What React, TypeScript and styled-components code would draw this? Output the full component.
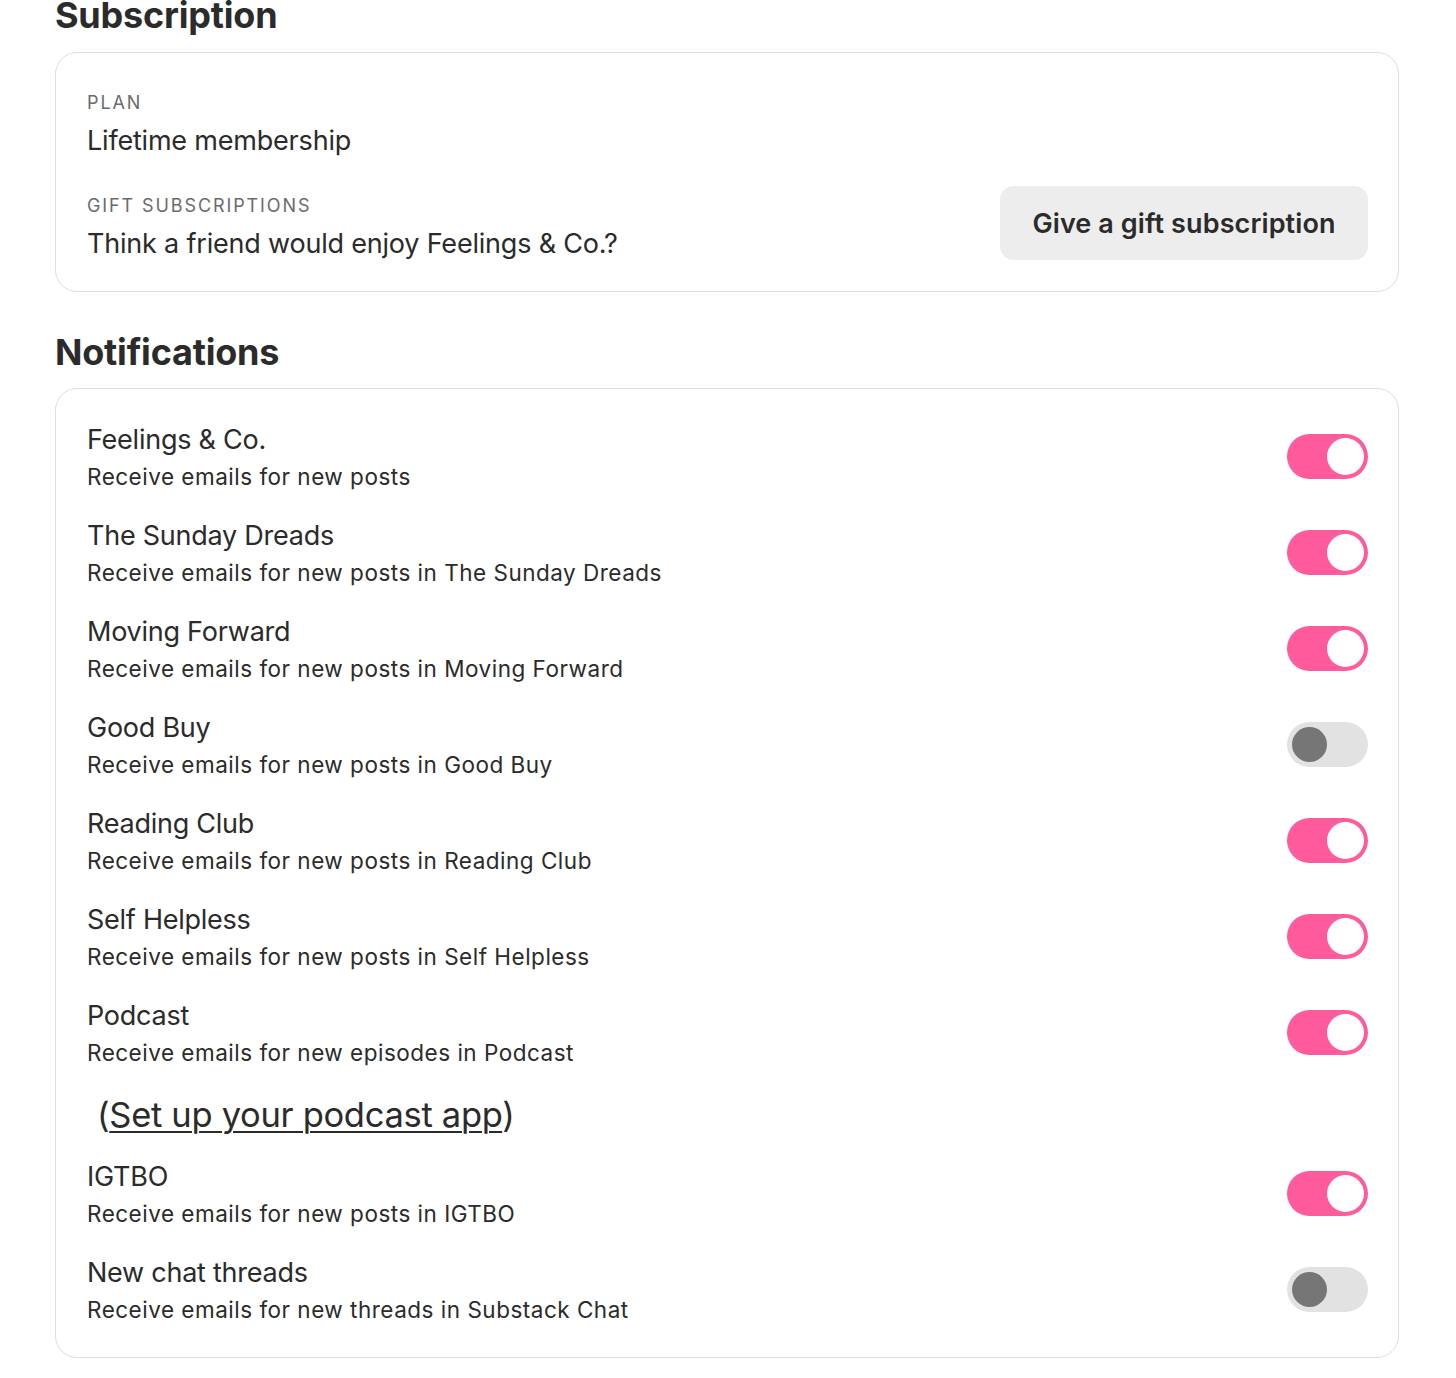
import React from 'react';
import styled, { createGlobalStyle } from 'styled-components';

const GlobalStyle = createGlobalStyle`
  html, body {
    margin: 0;
    padding: 0;
    background: #ffffff;
  }
  body {
    font-family: Inter, "Noto Sans", "Liberation Sans", sans-serif;
    color: #2b2b2b;
    -webkit-font-smoothing: antialiased;
  }
`;

const Page = styled.div`
  width: 1344px;
  padding: 0 0 20px 55px;
  margin-top: -7px;
`;

const SectionTitle = styled.h2<{ $gap?: number }>`
  font-size: 36px;
  line-height: 44px;
  font-weight: 700;
  letter-spacing: -0.2px;
  color: #2b2b2b;
  margin: 0 0 ${(p) => p.$gap ?? 20}px 0;
`;

const Card = styled.div`
  border: 1.5px solid #dedede;
  border-radius: 22px;
  box-sizing: border-box;
  margin-bottom: 38px;
`;

const SubBody = styled.div`
  padding: 38px 30px 30px 31px;
  display: flex;
  flex-direction: column;
  gap: 28px;
`;

const InfoRow = styled.div`
  display: flex;
  align-items: flex-end;
  justify-content: space-between;
`;

const Label = styled.div`
  font-size: 18px;
  line-height: 24px;
  letter-spacing: 1.9px;
  text-transform: uppercase;
  color: #6b6b6b;
  margin-bottom: 9px;
`;

const Value = styled.div`
  font-size: 27px;
  line-height: 34px;
  letter-spacing: -0.2px;
  color: #2b2b2b;
`;

const GiftButton = styled.button`
  font-family: inherit;
  background: #ededed;
  border: none;
  border-radius: 14px;
  width: 368px;
  height: 74px;
  font-size: 27px;
  font-weight: 600;
  color: #2b2b2b;
  letter-spacing: 0.1px;
  cursor: pointer;
  margin-bottom: 1px;
`;

const NotifBody = styled.div`
  padding: 32px 30px 32px 31px;
  display: flex;
  flex-direction: column;
  gap: 25px;
`;

const NotifRow = styled.div`
  display: flex;
  align-items: center;
  justify-content: space-between;
`;

const NotifTitle = styled.div`
  font-size: 27px;
  line-height: 38px;
  letter-spacing: -0.25px;
  color: #2b2b2b;
`;

const NotifSub = styled.div`
  font-size: 22.5px;
  line-height: 30px;
  letter-spacing: 0.5px;
  color: #2b2b2b;
  margin-top: 3px;
`;

const Toggle = styled.div<{ $on: boolean }>`
  width: 81px;
  height: 45px;
  border-radius: 23px;
  background: ${(p) => (p.$on ? '#ff5a9c' : '#e2e2e2')};
  position: relative;
  flex-shrink: 0;
  &::after {
    content: '';
    position: absolute;
    top: ${(p) => (p.$on ? 4 : 5)}px;
    left: ${(p) => (p.$on ? 40 : 5)}px;
    width: ${(p) => (p.$on ? 37 : 35)}px;
    height: ${(p) => (p.$on ? 37 : 35)}px;
    border-radius: 50%;
    background: ${(p) => (p.$on ? '#ffffff' : '#767676')};
  }
`;

const PodcastLink = styled.div`
  font-size: 34.5px;
  line-height: 40px;
  letter-spacing: -0.3px;
  color: #2b2b2b;
  padding-left: 10px;
  margin: 2px 0 -2px 0;
  a {
    color: inherit;
    text-decoration: underline;
    text-underline-offset: 4px;
    text-decoration-thickness: 2px;
  }
`;

type Item = { title: string; sub: string; on: boolean; podcast?: boolean };

const items: Item[] = [
  { title: 'Feelings & Co.', sub: 'Receive emails for new posts', on: true },
  { title: 'The Sunday Dreads', sub: 'Receive emails for new posts in The Sunday Dreads', on: true },
  { title: 'Moving Forward', sub: 'Receive emails for new posts in Moving Forward', on: true },
  { title: 'Good Buy', sub: 'Receive emails for new posts in Good Buy', on: false },
  { title: 'Reading Club', sub: 'Receive emails for new posts in Reading Club', on: true },
  { title: 'Self Helpless', sub: 'Receive emails for new posts in Self Helpless', on: true },
  { title: 'Podcast', sub: 'Receive emails for new episodes in Podcast', on: true, podcast: true },
  { title: 'IGTBO', sub: 'Receive emails for new posts in IGTBO', on: true },
  { title: 'New chat threads', sub: 'Receive emails for new threads in Substack Chat', on: false },
];

const App = () => {
  return (
    <Page>
      <GlobalStyle />
      <SectionTitle $gap={15}>Subscription</SectionTitle>
      <Card>
        <SubBody>
          <div>
            <Label>Plan</Label>
            <Value>Lifetime membership</Value>
          </div>
          <InfoRow>
            <div>
              <Label>Gift subscriptions</Label>
              <Value>Think a friend would enjoy Feelings &amp; Co.?</Value>
            </div>
            <GiftButton>Give a gift subscription</GiftButton>
          </InfoRow>
        </SubBody>
      </Card>
      <SectionTitle $gap={14}>Notifications</SectionTitle>
      <Card>
        <NotifBody>
          {items.map((it) => (
            <React.Fragment key={it.title}>
              <NotifRow>
                <div>
                  <NotifTitle>{it.title}</NotifTitle>
                  <NotifSub>{it.sub}</NotifSub>
                </div>
                <Toggle $on={it.on} />
              </NotifRow>
              {it.podcast && (
                <PodcastLink>
                  (<a href="#">Set up your podcast app</a>)
                </PodcastLink>
              )}
            </React.Fragment>
          ))}
        </NotifBody>
      </Card>
    </Page>
  );
};

export default App;
